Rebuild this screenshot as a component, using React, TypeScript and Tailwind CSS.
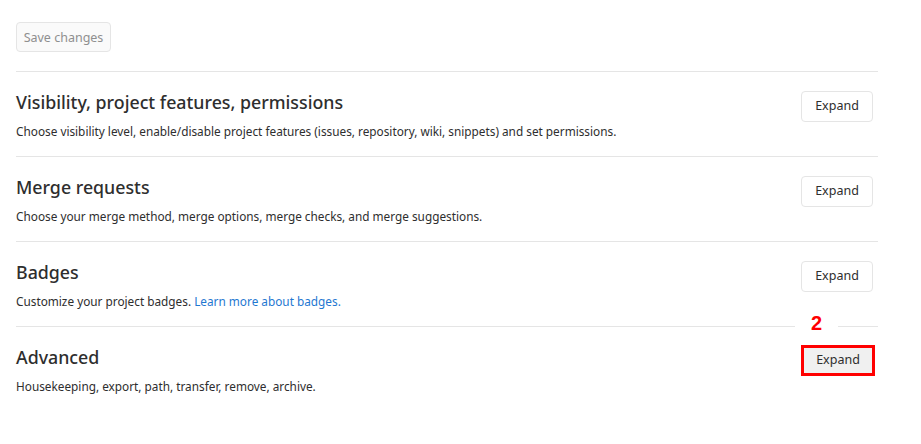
import React from 'react';

interface SectionProps {
  title: string;
  children: React.ReactNode;
  highlighted?: boolean;
  marker?: string;
}

function Section({ title, children, highlighted, marker }: SectionProps) {
  return (
    <section className="relative border-t border-[#e5e5e5] flex items-start justify-between pt-[18px] pb-[18px] h-[85px]">
      {marker && (
        <span className="absolute -top-[16px] left-[779px] w-[43px] bg-white text-center text-[20px] leading-[24px] font-bold text-[#ff0000] font-['Liberation_Sans',sans-serif]">
          {marker}
        </span>
      )}
      <div className="flex flex-col">
        <h4 className="text-[17.8px] leading-[24px] font-medium text-[#2e2e2e]">{title}</h4>
        <p className="text-[11.8px] leading-[18px] text-[#2e2e2e] mt-[8px]">{children}</p>
      </div>
      <button
        className={
          highlighted
            ? 'mr-[3px] w-[74px] h-[31px] border-[3px] border-[#ff0000] bg-[#f0f0f0] text-[12.5px] text-[#2e2e2e]'
            : 'mr-[5px] mt-[1px] w-[72px] h-[31px] rounded-[4px] border border-[#e5e5e5] bg-white text-[12.5px] text-[#2e2e2e]'
        }
      >
        Expand
      </button>
    </section>
  );
}

export default function App() {
  return (
    <div className="min-h-[444px] w-[921px] bg-white pl-4 pr-[43px] pt-[22px] font-['Noto_Sans',sans-serif]">
      <button className="w-[95px] h-[30px] rounded-[4px] border border-[#e5e5e5] bg-[#fafafa] text-[12.5px] pt-[2px] text-[#8f8f8f]">
        Save changes
      </button>
      <div className="mt-[19px]">
        <Section title="Visibility, project features, permissions">
          Choose visibility level, enable/disable project features (issues, repository, wiki, snippets) and set permissions.
        </Section>
        <Section title="Merge requests">
          Choose your merge method, merge options, merge checks, and merge suggestions.
        </Section>
        <Section title="Badges">
          Customize your project badges. <a className="text-[#1f78d1]" href="#">Learn more about badges.</a>
        </Section>
        <Section title="Advanced" highlighted marker="2">
          Housekeeping, export, path, transfer, remove, archive.
        </Section>
      </div>
    </div>
  );
}
